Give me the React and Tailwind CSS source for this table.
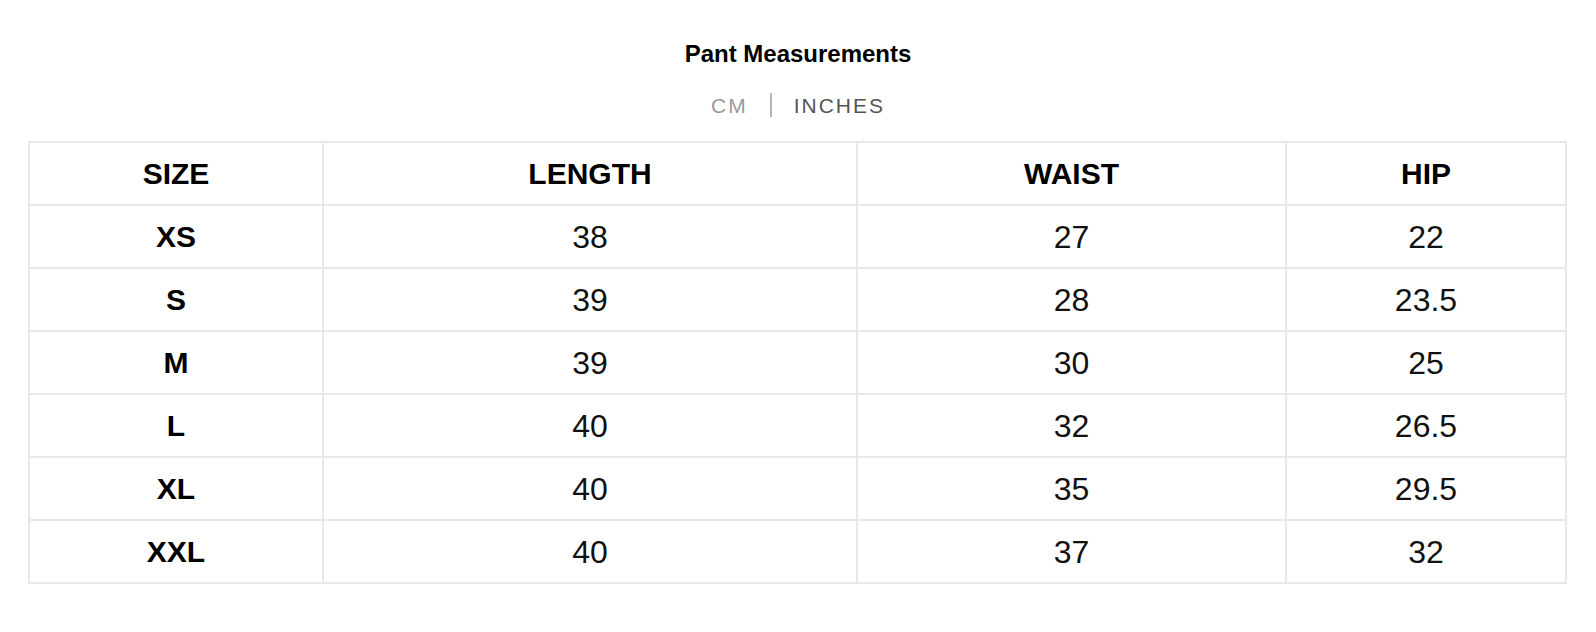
const rows = [
  ["XS", "38", "27", "22"],
  ["S", "39", "28", "23.5"],
  ["M", "39", "30", "25"],
  ["L", "40", "32", "26.5"],
  ["XL", "40", "35", "29.5"],
  ["XXL", "40", "37", "32"],
]

const headers = ["SIZE", "LENGTH", "WAIST", "HIP"]

const App = () => {
  return (
    <div className="w-[1596px] h-[632px] bg-white font-['Liberation_Sans',Arial,sans-serif] pt-[42px]">
      <h1 className="text-center text-[24px] leading-none font-bold text-black">Pant Measurements</h1>

      <div className="mt-[27px] flex items-center justify-center gap-[22px] text-[21px] leading-none tracking-[2px]">
        <span className="text-[#9a9a9a]">CM</span>
        <span className="w-[2px] h-[24px] bg-[#b5b5b5]"></span>
        <span className="text-[#555555]">INCHES</span>
      </div>

      <div className="mt-[24px] ml-[28px] w-[1539px] grid grid-cols-[292px_532px_427px_278px] auto-rows-[61px] gap-[2px] p-[2px] bg-[#e7e8e8]">
        {headers.map((h) => (
          <div key={h} className="bg-white flex items-center justify-center text-[30px] font-bold text-black">
            {h}
          </div>
        ))}
        {rows.map((r) =>
          r.map((cell, i) => (
            <div
              key={r[0] + i}
              className={
                i === 0
                  ? "bg-white flex items-center justify-center text-[30px] font-bold text-black"
                  : "bg-white flex items-center justify-center text-[32px] text-[#111111]"
              }
            >
              {cell}
            </div>
          ))
        )}
      </div>
    </div>
  )
}

export default App
